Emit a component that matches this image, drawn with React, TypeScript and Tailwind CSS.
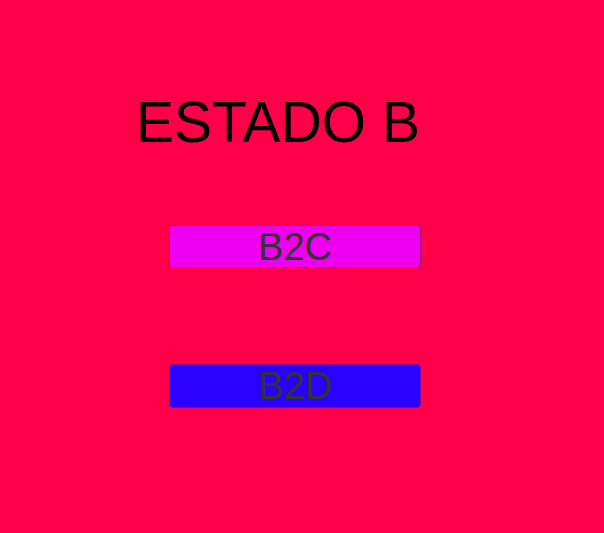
export default function App() {
  return (
    <div className="h-[533px] w-full bg-[#ff0048] font-['Liberation_Sans',Arial,sans-serif]">
      <div className="pt-[90px] pl-[136px]">
        <h1 className="text-[57px] leading-[65px] text-black">ESTADO B</h1>
      </div>
      <div className="mt-[70px] flex flex-col gap-[96px] pl-[169px]">
        <button className="flex h-[43px] w-[252px] items-center justify-center rounded-[4px] border border-[#9c1a82] bg-[#ee00ee] text-[38px] leading-none text-[#333333]">
          B2C
        </button>
        <button className="flex h-[44px] w-[252px] items-center justify-center rounded-[4px] border border-[#7a0a9a] bg-[#2a00ff] text-[38px] leading-none text-[#333333]">
          B2D
        </button>
      </div>
    </div>
  );
}
